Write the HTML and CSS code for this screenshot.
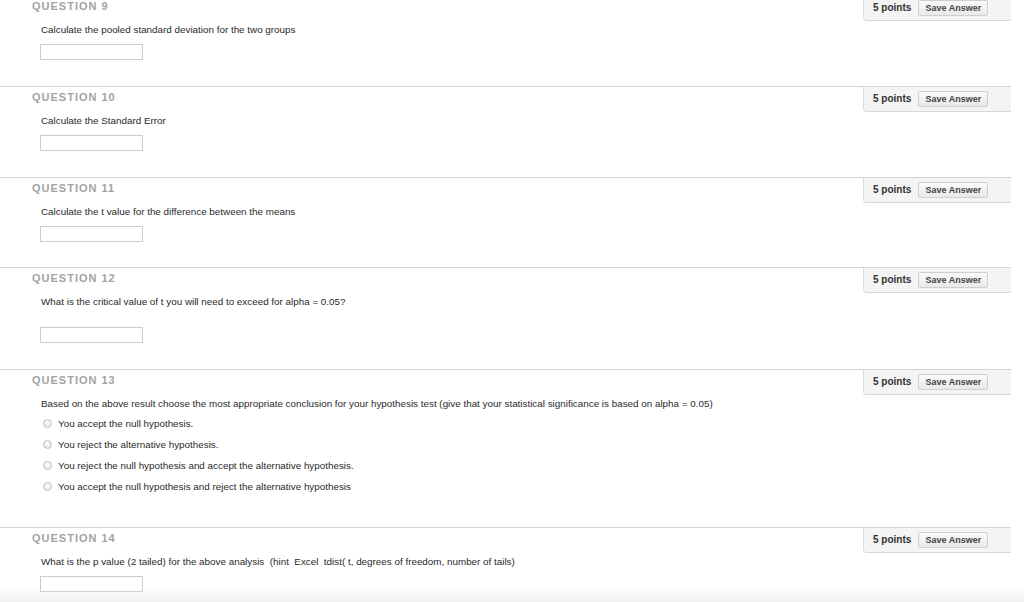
FILE: index.html
```html
<!DOCTYPE html>
<html lang="en">
<head>
<meta charset="utf-8">
<title>Questions</title>
<link rel="stylesheet" href="styles.css">
</head>
<body>
<div class="page">
  <section class="question">
    <div class="q-head">
      <h3 class="q-label">QUESTION 9</h3>
      <div class="points-box"><span class="points">5 points</span><button class="save">Save Answer</button></div>
    </div>
    <div class="q-body">
      <p class="q-text">Calculate the pooled standard deviation for the two groups</p>
      <input class="answer" type="text">
    </div>
  </section>
  <section class="question">
    <div class="q-head">
      <h3 class="q-label">QUESTION 10</h3>
      <div class="points-box"><span class="points">5 points</span><button class="save">Save Answer</button></div>
    </div>
    <div class="q-body">
      <p class="q-text">Calculate the Standard Error</p>
      <input class="answer" type="text">
    </div>
  </section>
  <section class="question question-short">
    <div class="q-head">
      <h3 class="q-label">QUESTION 11</h3>
      <div class="points-box"><span class="points">5 points</span><button class="save">Save Answer</button></div>
    </div>
    <div class="q-body">
      <p class="q-text">Calculate the t value for the difference between the means</p>
      <input class="answer" type="text">
    </div>
  </section>
  <section class="question">
    <div class="q-head">
      <h3 class="q-label">QUESTION 12</h3>
      <div class="points-box"><span class="points">5 points</span><button class="save">Save Answer</button></div>
    </div>
    <div class="q-body">
      <p class="q-text q-text-spaced">What is the critical value of t you will need to exceed for alpha = 0.05?</p>
      <input class="answer" type="text">
    </div>
  </section>
  <section class="question question-choice">
    <div class="q-head">
      <h3 class="q-label">QUESTION 13</h3>
      <div class="points-box"><span class="points">5 points</span><button class="save">Save Answer</button></div>
    </div>
    <div class="q-body">
      <p class="q-text">Based on the above result choose the most appropriate conclusion for your hypothesis test (give that your statistical significance is based on alpha = 0.05)</p>
      <ul class="choices">
        <li class="choice"><span class="radio"></span>You accept the null hypothesis.</li>
        <li class="choice"><span class="radio"></span>You reject the alternative hypothesis.</li>
        <li class="choice"><span class="radio"></span>You reject the null hypothesis and accept the alternative hypothesis.</li>
        <li class="choice"><span class="radio"></span>You accept the null hypothesis and reject the alternative hypothesis</li>
      </ul>
    </div>
  </section>
  <section class="question">
    <div class="q-head">
      <h3 class="q-label">QUESTION 14</h3>
      <div class="points-box"><span class="points">5 points</span><button class="save">Save Answer</button></div>
    </div>
    <div class="q-body">
      <p class="q-text">What is the p value (2 tailed) for the above analysis &nbsp;(hint &nbsp;Excel &nbsp;tdist( t, degrees of freedom, number of tails)</p>
      <input class="answer" type="text">
    </div>
  </section>
</div>
<div class="bottom-fade"></div>
</body>
</html>
```

FILE: styles.css
```css
html, body {
  margin: 0;
  padding: 0;
  background: #ffffff;
  font-family: "Liberation Sans", Arial, Helvetica, sans-serif;
  color: #333333;
  overflow: hidden;
}

.page {
  width: 1011px;
  margin-top: -5px;
}

.question {
  border-top: 1px solid #d4d4d4;
  padding-bottom: 26px;
}

.question-short {
  padding-bottom: 25px;
}

.question-choice {
  padding-bottom: 30px;
}

.q-head {
  display: flex;
  justify-content: space-between;
  align-items: flex-start;
  height: 25px;
}

.q-label {
  margin: 0;
  padding: 4px 0 0 32px;
  font-size: 11px;
  line-height: 13px;
  font-weight: bold;
  letter-spacing: 1px;
  color: #a3a3a3;
}

.points-box {
  display: flex;
  align-items: center;
  gap: 7px;
  box-sizing: border-box;
  width: 148px;
  height: 25px;
  padding: 0 0 1px 9px;
  background: #f4f4f4;
  border-left: 1px solid #dcdcdc;
  border-bottom: 1px solid #d8d8d8;
  border-bottom-left-radius: 4px;
}

.points {
  font-size: 10px;
  font-weight: bold;
  color: #333333;
  white-space: nowrap;
}

.save {
  box-sizing: border-box;
  height: 16px;
  width: 70px;
  padding: 0;
  margin: 0;
  font-family: "Liberation Sans", Arial, Helvetica, sans-serif;
  font-size: 9px;
  font-weight: bold;
  color: #444444;
  background: linear-gradient(#fafafa, #e9e9e9);
  border: 1px solid #cfcfcf;
  border-radius: 2px;
}

.q-body {
  padding: 2px 0 0 41px;
}

.q-text {
  margin: 0;
  font-size: 9.85px;
  line-height: 14px;
  color: #2a2a2a;
}

.q-text-spaced {
  padding-bottom: 11px;
}

.answer {
  display: block;
  box-sizing: border-box;
  margin: 7px 0 0 -1px;
  width: 103px;
  height: 16px;
  padding: 0;
  border: 1px solid #cccccc;
  background: #ffffff;
}

.choices {
  list-style: none;
  margin: 2px 0 0 0;
  padding: 0;
}

.choice {
  display: flex;
  align-items: center;
  height: 21px;
  font-size: 9.85px;
  color: #2a2a2a;
}

.radio {
  box-sizing: border-box;
  width: 9px;
  height: 9px;
  margin: 0 6px 0 2px;
  border-radius: 50%;
  border: 1px solid #c2c2c2;
  background: radial-gradient(circle at 50% 35%, #fdfdfd, #dedede);
}

.bottom-fade {
  position: fixed;
  left: 0;
  right: 0;
  bottom: 0;
  height: 14px;
  background: linear-gradient(rgba(240, 240, 240, 0), rgba(236, 236, 236, 0.7));
  pointer-events: none;
}
```
